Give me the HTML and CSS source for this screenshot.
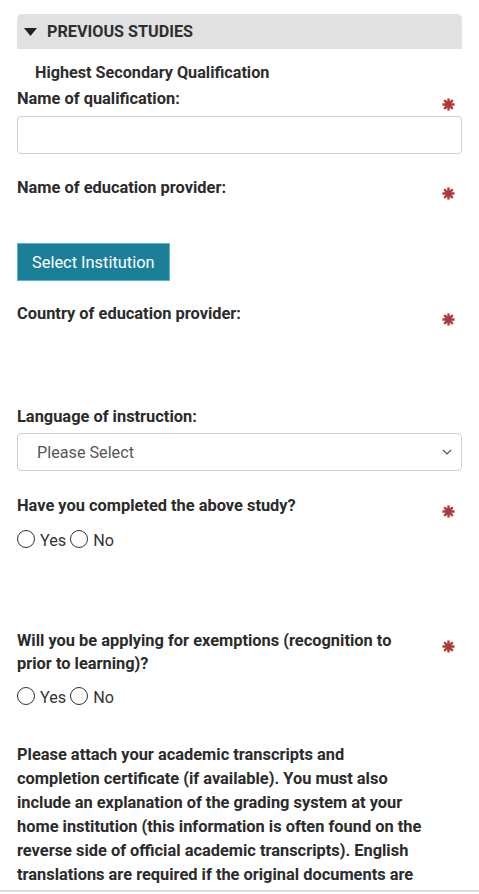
FILE: index.html
```html
<!DOCTYPE html>
<html>
<head>
<meta charset="utf-8">
<link rel="stylesheet" href="styles.css">
</head>
<body>
<div class="page">
  <div class="section-head">
    <svg class="caret" width="13" height="8" viewBox="0 0 13 8"><path d="M0 0H13L6.5 8Z" fill="#222"/></svg>
    <span>PREVIOUS STUDIES</span>
  </div>

  <div class="subhead">Highest Secondary Qualification</div>

  <div class="field-head f-qual">
    <label class="label">Name of qualification:</label>
    <svg class="req" viewBox="0 0 14 14"><g stroke="#b03838" stroke-width="2.6"><path d="M7 0.5V13.5M0.5 7H13.5M2.4 2.4L11.6 11.6M11.6 2.4L2.4 11.6"/></g></svg>
  </div>
  <div class="input"></div>

  <div class="field-head f-prov">
    <label class="label">Name of education provider:</label>
    <svg class="req" viewBox="0 0 14 14"><g stroke="#b03838" stroke-width="2.6"><path d="M7 0.5V13.5M0.5 7H13.5M2.4 2.4L11.6 11.6M11.6 2.4L2.4 11.6"/></g></svg>
  </div>
  <button class="btn">Select Institution</button>

  <div class="field-head f-country">
    <label class="label">Country of education provider:</label>
    <svg class="req" viewBox="0 0 14 14"><g stroke="#b03838" stroke-width="2.6"><path d="M7 0.5V13.5M0.5 7H13.5M2.4 2.4L11.6 11.6M11.6 2.4L2.4 11.6"/></g></svg>
  </div>

  <div class="field-head f-lang">
    <label class="label">Language of instruction:</label>
  </div>
  <div class="select">
    <span>Please Select</span>
    <svg width="10" height="6" viewBox="0 0 10 6"><path d="M1 1L5 5L9 1" fill="none" stroke="#555" stroke-width="1.2"/></svg>
  </div>

  <div class="field-head f-done">
    <label class="label">Have you completed the above study?</label>
    <svg class="req" viewBox="0 0 14 14"><g stroke="#b03838" stroke-width="2.6"><path d="M7 0.5V13.5M0.5 7H13.5M2.4 2.4L11.6 11.6M11.6 2.4L2.4 11.6"/></g></svg>
  </div>
  <div class="radios r-done">
    <span class="radio"></span><span class="opt">Yes</span>
    <span class="radio"></span><span class="opt">No</span>
  </div>

  <div class="field-head f-exempt">
    <label class="label">Will you be applying for exemptions (recognition to prior to learning)?</label>
    <svg class="req" viewBox="0 0 14 14"><g stroke="#b03838" stroke-width="2.6"><path d="M7 0.5V13.5M0.5 7H13.5M2.4 2.4L11.6 11.6M11.6 2.4L2.4 11.6"/></g></svg>
  </div>
  <div class="radios r-exempt">
    <span class="radio"></span><span class="opt">Yes</span>
    <span class="radio"></span><span class="opt">No</span>
  </div>

  <p class="note">Please attach your academic transcripts and completion certificate (if available). You must also include an explanation of the grading system at your home institution (this information is often found on the reverse side of official academic transcripts). English translations are required if the original documents are</p>
</div>
<div class="bottom-line"></div>
</body>
</html>
```

FILE: styles.css
```css
html, body {
  margin: 0;
  padding: 0;
  background: #fff;
}
body {
  font-family: Roboto, "Liberation Sans", sans-serif;
  color: #2b2b2b;
  width: 479px;
  height: 894px;
  overflow: hidden;
  position: relative;
}
.page {
  padding: 14px 17px 0 17px;
  height: 877px;
  overflow: hidden;
}
.section-head {
  height: 35px;
  background: #e1e1e1;
  border-radius: 5px 5px 0 0;
  display: flex;
  align-items: center;
  padding-left: 7px;
  font-weight: 700;
  font-size: 16.2px;
  color: #2e2e2e;
}
.caret {
  margin-right: 10px;
  margin-top: 1px;
}
.subhead {
  margin-top: 14px;
  padding-left: 18px;
  font-size: 16.2px;
  font-weight: 700;
  line-height: 20px;
  color: #2e2e2e;
}
.field-head {
  display: flex;
  justify-content: space-between;
  align-items: flex-start;
  padding-right: 7px;
}
.label {
  font-size: 16.4px;
  font-weight: 700;
  line-height: 23px;
  max-width: 400px;
  color: #2b2b2b;
}
.req {
  width: 13px;
  height: 13px;
  margin-top: 11px;
  flex: none;
}
.f-qual { margin-top: 4px; }
.input {
  margin-top: 5px;
  height: 36px;
  border: 1px solid #cfcfcf;
  border-radius: 4px;
}
.f-prov { margin-top: 22px; }
.btn {
  display: block;
  margin-top: 43px;
  height: 38px;
  padding: 0 14px;
  background: #1c7f9a;
  border: 1px solid #5ab6cb;
  color: #fff;
  font-family: Roboto, "Liberation Sans", sans-serif;
  font-size: 16.4px;
  border-radius: 0;
}
.f-country { margin-top: 21px; }
.f-lang { margin-top: 79px; }
.select {
  margin-top: 5px;
  height: 36px;
  border: 1px solid #cfcfcf;
  border-radius: 4px;
  display: flex;
  align-items: center;
  justify-content: space-between;
  padding: 0 9px 0 19px;
  font-size: 16.2px;
  color: #555;
}
.f-done { margin-top: 23px; }
.radios {
  display: flex;
  align-items: center;
  height: 22px;
  font-size: 16.2px;
  color: #333;
}
.r-done { margin-top: 10px; }
.radio {
  width: 16px;
  height: 16px;
  border: 1px solid #333;
  border-radius: 50%;
  margin-right: 5px;
  flex: none;
}
.opt {
  margin-right: 4px;
  padding-top: 2px;
}
.f-exempt { margin-top: 79px; }
.r-exempt { margin-top: 10px; }
.note {
  margin: 36px 0 0 0;
  max-width: 408px;
  font-size: 16.4px;
  font-weight: 700;
  line-height: 24px;
  color: #2b2b2b;
}
.bottom-line {
  position: absolute;
  left: 0;
  right: 0;
  top: 890px;
  height: 2px;
  background: #dedede;
}
```
